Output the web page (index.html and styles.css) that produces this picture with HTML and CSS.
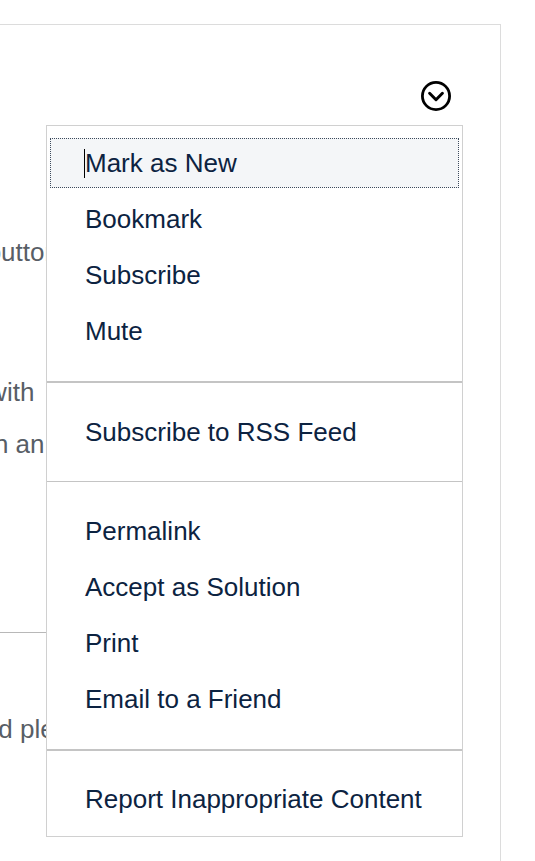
FILE: index.html
```html
<!DOCTYPE html>
<html lang="en">
<head>
<meta charset="utf-8">
<title>Options menu</title>
<link rel="stylesheet" href="styles.css">
</head>
<body>
<div class="page">
  <div class="card">
    <div class="card-head">
      <button class="toggle" type="button" aria-label="Show options">
        <svg width="32" height="32" viewBox="0 0 32 32" aria-hidden="true">
          <circle cx="16" cy="16" r="13.6" fill="none" stroke="#000" stroke-width="2.8"/>
          <path d="M9.6 13.3 L16 19.7 L22.4 13.3" fill="none" stroke="#000" stroke-width="3" stroke-linecap="round" stroke-linejoin="round"/>
        </svg>
      </button>
    </div>
    <div class="card-body">
      <p class="para para-first">Use the Options button to open the menu</p>
      <div class="para para-second">
        <div class="line">Flag the threads with</div>
        <div class="line">Open the menu on an item</div>
      </div>
      <hr class="rule">
      <p class="para para-third">Read the code and please be kind</p>
    </div>

    <div class="menu" role="menu">
      <ul class="menu-group">
        <li class="item is-focused" role="menuitem"><span class="caret"></span>Mark as New</li>
        <li class="item" role="menuitem">Bookmark</li>
        <li class="item" role="menuitem">Subscribe</li>
        <li class="item" role="menuitem">Mute</li>
      </ul>
      <div class="sep"></div>
      <ul class="menu-group">
        <li class="item" role="menuitem">Subscribe to RSS Feed</li>
      </ul>
      <div class="sep sep-thin"></div>
      <ul class="menu-group">
        <li class="item" role="menuitem">Permalink</li>
        <li class="item" role="menuitem">Accept as Solution</li>
        <li class="item" role="menuitem">Print</li>
        <li class="item" role="menuitem">Email to a Friend</li>
      </ul>
      <div class="sep"></div>
      <ul class="menu-group menu-group-last">
        <li class="item" role="menuitem">Report Inappropriate Content</li>
      </ul>
    </div>
  </div>
</div>
</body>
</html>
```

FILE: styles.css
```css
html, body {
  margin: 0;
  padding: 0;
  background: #ffffff;
}

body {
  font-family: "Liberation Sans", Arial, sans-serif;
  overflow: hidden;
}

.page {
  height: 861px;
  padding-top: 24px;
  box-sizing: border-box;
  overflow: hidden;
}

.card {
  position: relative;
  margin-left: -227px;
  width: 728px;
  height: 837px;
  box-sizing: border-box;
  border: 1px solid #dcdcdc;
  border-bottom: 0;
  background: #ffffff;
}

.card-head {
  display: flex;
  justify-content: flex-end;
  padding: 55px 48px 0 0;
}

.toggle {
  display: block;
  width: 32px;
  height: 32px;
  padding: 0;
  margin: 0;
  border: 0;
  background: none;
}

.toggle svg {
  display: block;
}

.card-body {
  padding: 0 60px 0 19px;
  color: #585e66;
  font-size: 26px;
  white-space: nowrap;
  overflow: hidden;
}

.para {
  margin: 0;
  line-height: 52px;
}

.para-first {
  margin-top: 114px;
}

.para-second {
  margin-top: 88px;
}

.rule {
  margin: 162px 0 0;
  border: 0;
  border-top: 1px solid #b8b8b8;
  height: 0;
}

.para-third {
  margin-top: 70px;
}

/* dropdown menu */
.menu {
  position: absolute;
  top: 100px;
  right: 37px;
  width: 417px;
  box-sizing: border-box;
  border: 1px solid #d0d0d0;
  background: #ffffff;
  color: #0c2341;
  font-size: 26px;
  z-index: 2;
}

.menu-group {
  list-style: none;
  margin: 0;
  padding: 12px 0;
}

.menu-group-last {
  padding: 11px 0 12px;
}

.item {
  display: flex;
  align-items: center;
  height: 50px;
  margin: 0 3px;
  padding-left: 35px;
  white-space: nowrap;
}

.item + .item {
  margin-top: 6px;
}

.item.is-focused {
  background: #f4f6f8;
  outline: 1px dotted #3d4a5c;
  outline-offset: -1px;
}

.caret {
  display: block;
  width: 1px;
  height: 29px;
  margin-left: -1px;
  background: #000000;
}

.sep {
  height: 2px;
  margin: 13px 0 12px;
  background: #c4c4c4;
}

.sep-thin {
  height: 1px;
  margin: 12px 0 12px;
}
```
